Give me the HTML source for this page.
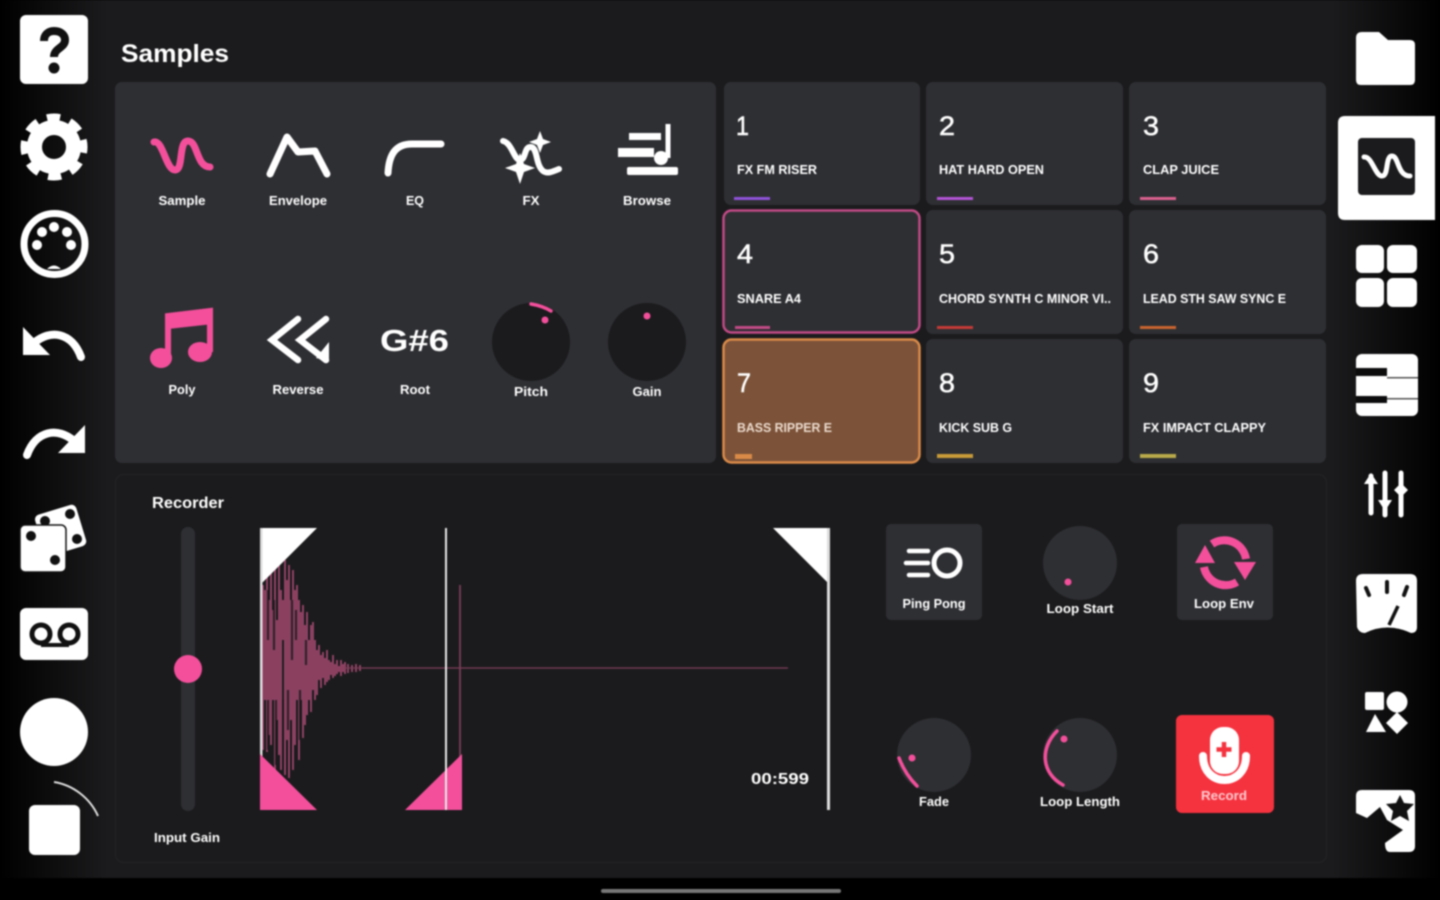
<!DOCTYPE html>
<html><head><meta charset="utf-8"><title>Samples</title>
<style>
html,body{margin:0;padding:0;width:1440px;height:900px;overflow:hidden;background:#000}
svg{display:block;filter:blur(.7px)}
text{font-family:"Liberation Sans",sans-serif;fill:#fff}
.l{font-size:12.5px;font-weight:bold;text-anchor:middle}
.n{font-size:27px;stroke:#fff;stroke-width:.5px}
.p{font-size:12.5px;font-weight:bold}
</style></head><body>
<svg width="1440" height="900" viewBox="0 0 1440 900" xmlns="http://www.w3.org/2000/svg">
<defs>
<linearGradient id="bg" x1="0" x2="1" y1="0" y2="0">
<stop offset="0" stop-color="#000"/><stop offset=".075" stop-color="#1b1b1d"/><stop offset=".925" stop-color="#1b1b1d"/><stop offset="1" stop-color="#000"/>
</linearGradient>
</defs>
<rect width="1440" height="878" fill="url(#bg)"/>
<rect y="878" width="1440" height="22" fill="#000"/>
<rect x="601" y="889" width="240" height="4" rx="2" fill="#777"/>

<!-- left rail -->
<rect x="20" y="15" width="68" height="69" rx="6" fill="#fff"/>
<path d="M44 41c0-6 4-10 10-10 7 0 11 4 11 9 0 8-11 8-11 17" fill="none" stroke="#111" stroke-width="8"/>
<circle cx="54" cy="68" r="5.500" fill="#111"/>
<circle cx="54" cy="147" r="19.500" fill="none" stroke="#fff" stroke-width="15"/>
<circle cx="54" cy="147" r="29.500" fill="none" stroke="#fff" stroke-width="8" stroke-dasharray="13 10.17" transform="rotate(-14 54 147)"/>
<circle cx="54.500" cy="244" r="30.500" fill="none" stroke="#fff" stroke-width="7"/>
<path d="M47 269q7-7 14 0z" fill="#fff"/>
<g fill="#fff"><circle cx="37" cy="245" r="5"/><circle cx="42" cy="232" r="5"/><circle cx="54" cy="227" r="5"/><circle cx="67" cy="232" r="5"/><circle cx="71" cy="245" r="5"/></g>
<path d="M23 327L50 355H23z" fill="#fff"/>
<path d="M34 343C50 329 72 332 81 357" fill="none" stroke="#fff" stroke-width="8" stroke-linecap="round"/>
<path d="M85 425L58 453H85z" fill="#fff"/>
<path d="M74 441C58 427 36 430 27 455" fill="none" stroke="#fff" stroke-width="8" stroke-linecap="round"/>
<rect x="39" y="509" width="43" height="43" rx="5" fill="#fff" transform="rotate(-17 60 530)"/>
<circle cx="70" cy="514" r="5" fill="#111"/><circle cx="77" cy="539" r="5" fill="#111"/><circle cx="45" cy="521" r="5" fill="#111"/>
<rect x="20" y="525" width="46" height="47" rx="5" fill="#fff" stroke="#111" stroke-width="1.500"/>
<circle cx="31" cy="536" r="5" fill="#111"/><circle cx="55" cy="560" r="5" fill="#111"/>
<rect x="20" y="608" width="68" height="52" rx="6" fill="#fff"/>
<circle cx="41" cy="634" r="9" fill="none" stroke="#111" stroke-width="5"/><circle cx="69" cy="634" r="9" fill="none" stroke="#111" stroke-width="5"/>
<path d="M41 645H69" stroke="#111" stroke-width="4"/>
<circle cx="54" cy="732" r="34" fill="#fff"/>
<rect x="29" y="805" width="51" height="50" rx="6" fill="#fff"/>
<path d="M54 782C73 785 90 798 98 816" fill="none" stroke="#ddd" stroke-width="2"/>

<!-- title -->
<text x="121" y="62" font-size="25" font-weight="bold" style="font-family:'Liberation Sans',sans-serif" textLength="108" lengthAdjust="spacingAndGlyphs" fill="#eee">Samples</text>

<!-- top left panel -->
<rect x="115" y="82" width="601" height="381" rx="7" fill="#2e2f33"/>
<path d="M154 142C163 140 166 170 175 170C184 170 178 141 188 141C198 141 196 167 210 167" fill="none" stroke="#f34f9b" stroke-width="7" stroke-linecap="round"/>
<path d="M270 174L287 137L298 152L315 151L327 174" fill="none" stroke="#fff" stroke-width="7" stroke-linecap="round" stroke-linejoin="round"/>
<path d="M388 173C389 155 395 144 412 144H441" fill="none" stroke="#fff" stroke-width="7" stroke-linecap="round"/>
<path d="M503 141C512 143 514 160 520 160C526 160 524 146 531 147C538 148 535 164 543 171C547 174 552 172 559 169" fill="none" stroke="#fff" stroke-width="6" stroke-linecap="round"/>
<path d="M520 153L524 164 535 168 524 172 520 184 516 172 505 168 516 164z M540 131L543 139 551 142 543 145 540 153 537 145 529 142 537 139z" fill="#fff"/>
<rect x="629" y="133" width="32" height="7" fill="#fff"/>
<rect x="618" y="148" width="36" height="9" fill="#fff"/>
<rect x="627" y="167" width="51" height="8" rx="2" fill="#fff"/>
<path d="M668 124V158" stroke="#fff" stroke-width="5"/>
<circle cx="661" cy="158" r="7" fill="#fff"/>
<text class="l" x="182" y="205" textLength="47" lengthAdjust="spacingAndGlyphs">Sample</text>
<text class="l" x="298" y="205" textLength="58" lengthAdjust="spacingAndGlyphs">Envelope</text>
<text class="l" x="415" y="205" textLength="18" lengthAdjust="spacingAndGlyphs">EQ</text>
<text class="l" x="531" y="205" textLength="17" lengthAdjust="spacingAndGlyphs">FX</text>
<text class="l" x="647" y="205" textLength="48" lengthAdjust="spacingAndGlyphs">Browse</text>

<path d="M168 358V316L210 311V352" fill="none" stroke="#f34f9b" stroke-width="6"/>
<path d="M168 314L213 308V324L168 329z" fill="#f34f9b"/>
<ellipse cx="161" cy="358" rx="11" ry="10" fill="#f34f9b"/><ellipse cx="200" cy="352" rx="12" ry="10" fill="#f34f9b"/>
<path d="M298 319L272 340L298 360M326 319L300 340L326 360" fill="none" stroke="#fff" stroke-width="6.500" stroke-linecap="round"/>
<path d="M329 342V361L316 358z" fill="#fff"/>
<text x="380" y="351" font-size="31" font-weight="bold" style="font-family:'Liberation Sans',sans-serif" textLength="69" lengthAdjust="spacingAndGlyphs" fill="#fff">G#6</text>
<circle cx="531" cy="342" r="39" fill="#1b1b1d"/>
<circle cx="647" cy="342" r="39" fill="#1b1b1d"/>
<path d="M531 304Q543 306 551 311" fill="none" stroke="#f34f9b" stroke-width="3.500" stroke-linecap="round"/>
<circle cx="545" cy="320" r="3.500" fill="#f34f9b"/>
<circle cx="647" cy="316" r="3.500" fill="#f34f9b"/>
<text class="l" x="182" y="394" textLength="27" lengthAdjust="spacingAndGlyphs">Poly</text>
<text class="l" x="298" y="394" textLength="51" lengthAdjust="spacingAndGlyphs">Reverse</text>
<text class="l" x="415" y="394" textLength="30" lengthAdjust="spacingAndGlyphs">Root</text>
<text class="l" x="531" y="396" textLength="34" lengthAdjust="spacingAndGlyphs">Pitch</text>
<text class="l" x="647" y="396" textLength="29" lengthAdjust="spacingAndGlyphs">Gain</text>

<!-- pads -->
<g fill="#2e2f33">
<rect x="724" y="82" width="196" height="123" rx="7"/><rect x="926" y="82" width="197" height="123" rx="7"/><rect x="1129" y="82" width="197" height="123" rx="7"/>
<rect x="723.500" y="210.500" width="196" height="122" rx="8" stroke="#c04a85" stroke-width="2.500"/><rect x="926" y="210" width="197" height="124" rx="7"/><rect x="1129" y="210" width="197" height="124" rx="7"/>
<rect x="926" y="339" width="197" height="124" rx="7"/><rect x="1129" y="339" width="197" height="124" rx="7"/>
</g>
<rect x="723.500" y="339.500" width="196" height="123" rx="8" fill="#7c5339" stroke="#d98a48" stroke-width="2.500"/>
<g class="nums">
<text class="n" x="736" y="135" textLength="13" lengthAdjust="spacingAndGlyphs">1</text>
<text class="n" x="939" y="135" textLength="16" lengthAdjust="spacingAndGlyphs">2</text>
<text class="n" x="1143" y="135" textLength="16" lengthAdjust="spacingAndGlyphs">3</text>
<text class="n" x="737" y="263" textLength="16" lengthAdjust="spacingAndGlyphs">4</text>
<text class="n" x="939" y="263" textLength="16" lengthAdjust="spacingAndGlyphs">5</text>
<text class="n" x="1143" y="263" textLength="16" lengthAdjust="spacingAndGlyphs">6</text>
<text class="n" x="737" y="392" textLength="14" lengthAdjust="spacingAndGlyphs">7</text>
<text class="n" x="939" y="392" textLength="16" lengthAdjust="spacingAndGlyphs">8</text>
<text class="n" x="1143" y="392" textLength="16" lengthAdjust="spacingAndGlyphs">9</text>
</g>
<text class="p" x="737" y="174" textLength="80" lengthAdjust="spacingAndGlyphs">FX FM RISER</text>
<text class="p" x="939" y="174" textLength="105" lengthAdjust="spacingAndGlyphs">HAT HARD OPEN</text>
<text class="p" x="1143" y="174" textLength="76" lengthAdjust="spacingAndGlyphs">CLAP JUICE</text>
<text class="p" x="737" y="303" textLength="64" lengthAdjust="spacingAndGlyphs">SNARE A4</text>
<text class="p" x="939" y="303" textLength="172" lengthAdjust="spacingAndGlyphs">CHORD SYNTH C MINOR VI..</text>
<text class="p" x="1143" y="303" textLength="143" lengthAdjust="spacingAndGlyphs">LEAD STH SAW SYNC E</text>
<text class="p" x="737" y="432" textLength="95" lengthAdjust="spacingAndGlyphs" style="fill:#ead9cc">BASS RIPPER E</text>
<text class="p" x="939" y="432" textLength="73" lengthAdjust="spacingAndGlyphs">KICK SUB G</text>
<text class="p" x="1143" y="432" textLength="123" lengthAdjust="spacingAndGlyphs">FX IMPACT CLAPPY</text>
<rect x="734" y="197" width="36" height="3" fill="#8e52d8"/>
<rect x="937" y="197" width="36" height="3" fill="#b254d6"/>
<rect x="1140" y="197" width="36" height="3" fill="#d9608f"/>
<rect x="735" y="326" width="35" height="3" fill="#c04a85"/>
<rect x="937" y="326" width="36" height="3" fill="#c23a38"/>
<rect x="1140" y="326" width="36" height="3" fill="#c8642f"/>
<rect x="735" y="454" width="17" height="5" fill="#d98a48"/>
<rect x="937" y="454" width="36" height="4" fill="#c89a38"/>
<rect x="1140" y="454" width="36" height="4" fill="#b8aa4a"/>

<!-- recorder -->
<rect x="115.500" y="474.500" width="1211" height="388" rx="8" fill="#1b1b1d" stroke="#242427"/>
<text x="152" y="508" font-size="15.500" font-weight="bold" style="font-family:'Liberation Sans',sans-serif" textLength="72" lengthAdjust="spacingAndGlyphs" fill="#e8e8e8">Recorder</text>
<rect x="181" y="527" width="14" height="284" rx="7" fill="#2e2f33"/>
<circle cx="188" cy="669" r="14" fill="#f34f9b"/>
<text class="l" x="187" y="842" textLength="66" lengthAdjust="spacingAndGlyphs">Input Gain</text>

<!-- waveform -->
<path d="M263 585V750M265 590V700M267 577V752M269 600V735M271 572V745M273 610V700M275 568V770M277 620V720M279 565V755M281 590V770M283 600V700M285 560V775M287 580V740M289 565V778M291 600V720M293 570V770M295 590V745M297 585V700M299 600V760M301 612V700M303 605V738M305 625V725M307 612V715M309 640V700M311 625V712M313 622V690M315 640V700M317 650V695M319 645V680M321 655V688M323 652V678M325 658V685M327 650V682M329 660V680M331 662V675M333 655V678M335 664V676M337 660V674M339 666V672M341 660V676M343 664V672M345 662V674M348 664V673M352 665V672M356 664V672M360 665V671" fill="none" stroke="#a84a72" stroke-width="1.600"/>
<path d="M268 590V640M268 700V750M276 700V765M283 640V765M292 600V660M300 690V740M274 600V650M288 690V730M306 640V665M296 610V640" fill="none" stroke="#1b1b1d" stroke-width="1.800"/>
<path d="M345 668H788" stroke="#7c3d58" stroke-width="1.300"/>
<path d="M460 585V780" stroke="#7c3d58" stroke-width="1.800"/>
<path d="M260 528H317L260 585z" fill="#fff"/>
<rect x="260" y="528" width="2.500" height="282" fill="#ddd"/>
<path d="M260 754L317 810H260z" fill="#f34f9b"/>
<path d="M462 754V810H405z" fill="#f34f9b"/>
<rect x="445" y="528" width="2" height="282" fill="#e8e8e8"/>
<path d="M773 528H830V585z" fill="#fff"/>
<rect x="827" y="528" width="3" height="282" fill="#ddd"/>
<text x="751" y="784" font-size="15.500" font-weight="bold" style="font-family:'Liberation Sans',sans-serif" textLength="58" lengthAdjust="spacingAndGlyphs" fill="#e8e8e8">00:599</text>

<!-- recorder controls -->
<rect x="886" y="524" width="96" height="96" rx="5" fill="#2e2f33"/>
<path d="M909 551H928M906 563H928M909 575H928" stroke="#fff" stroke-width="4.500" stroke-linecap="round"/>
<circle cx="947" cy="563" r="13" fill="none" stroke="#fff" stroke-width="5"/>
<text class="l" x="934" y="608" textLength="63" lengthAdjust="spacingAndGlyphs">Ping Pong</text>
<circle cx="1080" cy="563" r="37" fill="#2e2f33"/>
<circle cx="1068" cy="582" r="3.500" fill="#f34f9b"/>
<text class="l" x="1080" y="613" textLength="67" lengthAdjust="spacingAndGlyphs">Loop Start</text>
<rect x="1177" y="524" width="96" height="96" rx="5" fill="#2e2f33"/>
<path d="M1212 544A22 22 0 0 1 1246 559M1237 582A22 22 0 0 1 1204 567" fill="none" stroke="#f34f9b" stroke-width="8"/>
<path d="M1195 563L1205 545L1215 563zM1234 562H1256L1245 580z" fill="#f34f9b"/>
<text class="l" x="1224" y="608" textLength="60" lengthAdjust="spacingAndGlyphs">Loop Env</text>
<circle cx="934" cy="755" r="37" fill="#2e2f33"/>
<path d="M899 758Q905 774 917 786" fill="none" stroke="#f34f9b" stroke-width="3.500" stroke-linecap="round"/>
<circle cx="912" cy="758" r="3.500" fill="#f34f9b"/>
<text class="l" x="934" y="806" textLength="30" lengthAdjust="spacingAndGlyphs">Fade</text>
<circle cx="1080" cy="755" r="37" fill="#2e2f33"/>
<path d="M1057 731C1040 748 1041 773 1063 785" fill="none" stroke="#f34f9b" stroke-width="3.500" stroke-linecap="round"/>
<circle cx="1064" cy="739" r="3.500" fill="#f34f9b"/>
<text class="l" x="1080" y="806" textLength="80" lengthAdjust="spacingAndGlyphs">Loop Length</text>
<rect x="1176" y="715" width="98" height="98" rx="6" fill="#f5333f"/>
<rect x="1210" y="727" width="29" height="47" rx="13" fill="#fff"/>
<path d="M1224 742V757M1216.500 749.500H1231.500" stroke="#f5333f" stroke-width="4.500"/>
<path d="M1203 756C1203 788 1246 788 1246 756" fill="none" stroke="#fff" stroke-width="8" stroke-linecap="round"/>
<text class="l" x="1224" y="800" textLength="46" lengthAdjust="spacingAndGlyphs" style="fill:#ffc9cd">Record</text>

<!-- right rail -->
<path d="M1356 38q0-6 6-6h17l9 8h22q5 0 5 5v35q0 5-5 5h-49q-5 0-5-5z" fill="#fff"/>
<path d="M1345 116H1435V220H1345q-7 0-7-7V123q0-7 7-7z" fill="#fff"/>
<rect x="1358" y="138" width="57" height="57" rx="4" fill="#1b1b1d"/>
<path d="M1364 157C1372 156 1375 176 1382 176C1389 176 1385 156 1392 156C1399 156 1397 176 1410 176" fill="none" stroke="#fff" stroke-width="5" stroke-linecap="round"/>
<g fill="#fff">
<rect x="1356" y="245" width="28" height="28" rx="6"/><rect x="1387" y="245" width="30" height="28" rx="6"/>
<rect x="1356" y="278" width="28" height="29" rx="6"/><rect x="1387" y="278" width="30" height="29" rx="6"/>
<rect x="1356" y="354" width="62" height="62" rx="6"/>
</g>
<rect x="1356" y="368" width="31" height="8" fill="#0c0c0d"/>
<rect x="1356" y="396" width="31" height="7" fill="#0c0c0d"/>
<rect x="1387" y="377" width="31" height="1.500" fill="#555"/><rect x="1387" y="398" width="31" height="1.500" fill="#555"/>
<path d="M1371 476V513M1385 473V515M1401 473V515" stroke="#fff" stroke-width="5" stroke-linecap="round"/>
<path d="M1371 473L1378 484H1364z M1385 511L1378 500H1392z M1401 483L1408 490L1401 497L1394 490z" fill="#fff"/>
<path d="M1356 581q0-7 7-7h47q7 0 7 7v46q0 6-6 6q-24-11-46 0q-6 0-8-6z" fill="#fff"/>
<path d="M1366 588L1369 595M1387 582V592M1407 587L1404 595" stroke="#111" stroke-width="4" stroke-linecap="round"/>
<path d="M1398 606L1389 625" stroke="#111" stroke-width="3.500"/>
<rect x="1365" y="692" width="19" height="18" rx="2" fill="#fff"/>
<circle cx="1397" cy="702" r="10.500" fill="#fff"/>
<path d="M1375 714L1386 732H1366z" fill="#fff"/>
<path d="M1397 712L1408 723L1397 734L1386 723z" fill="#fff"/>
<path d="M1356 796q0-6 6-6h47q6 0 6 6v50q0 6-6 6h-19q-5 0-5-9l18-13-16-10-7-13-13 11-11-5z" fill="#fff"/>
<path d="M1400 795L1404 803 1414 804 1407 811 1409 821 1400 816 1391 821 1393 811 1386 804 1396 803z" fill="#111"/>
</svg>
</body></html>
